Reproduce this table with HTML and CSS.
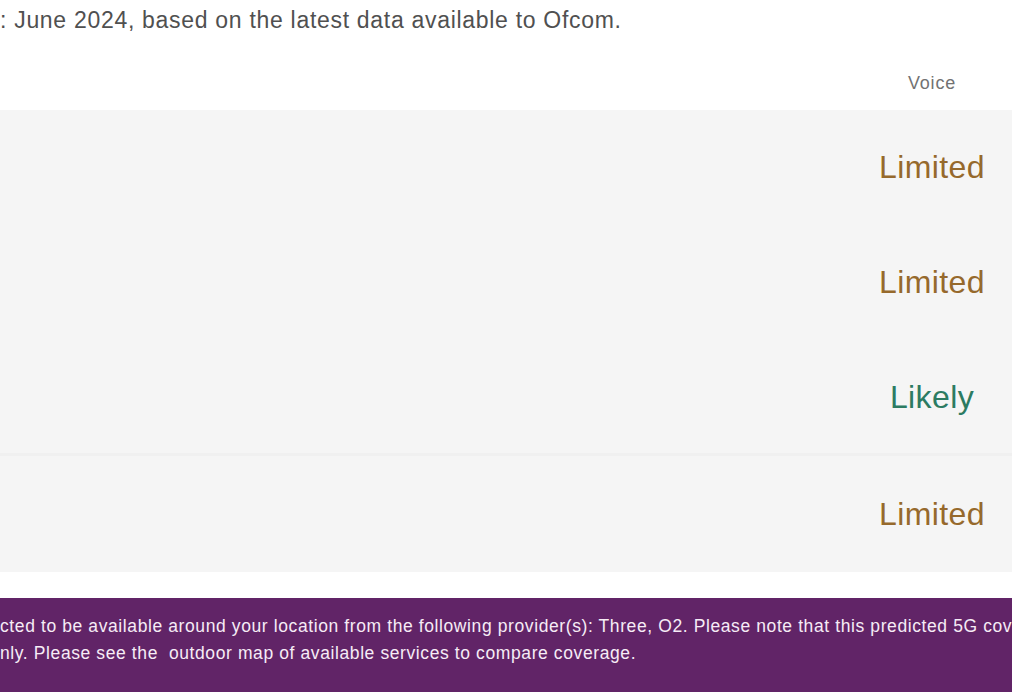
FILE: index.html
```html
<!DOCTYPE html>
<html lang="en">
<head>
<meta charset="utf-8">
<title>Mobile coverage</title>
<link rel="stylesheet" href="styles.css">
</head>
<body>
<div class="page">
  <p class="updated">: June 2024, based on the latest data available to Ofcom.</p>
  <div class="thead">
    <div class="col-spacer"></div>
    <div class="col-voice th">Voice</div>
  </div>
  <div class="tbody">
    <div class="row r1">
      <div class="col-spacer"></div>
      <div class="col-voice status limited">Limited</div>
    </div>
    <div class="row r2">
      <div class="col-spacer"></div>
      <div class="col-voice status limited">Limited</div>
    </div>
    <div class="row r3 divided">
      <div class="col-spacer"></div>
      <div class="col-voice status likely">Likely</div>
    </div>
    <div class="row r4">
      <div class="col-spacer"></div>
      <div class="col-voice status limited">Limited</div>
    </div>
  </div>
  <div class="banner">
    <p class="banner-line">cted to be available around your location from the following provider(s): Three, O2. Please note that this predicted 5G coverage is</p>
    <p class="banner-line">nly. Please see the&nbsp; outdoor map of available services to compare coverage.</p>
  </div>
</div>
</body>
</html>
```

FILE: styles.css
```css
html, body {
  margin: 0;
  padding: 0;
  background: #ffffff;
  overflow: hidden;
}

.page {
  width: 1012px;
  font-family: "Liberation Sans", Arial, sans-serif;
}

.updated {
  margin: 0;
  padding-top: 8px;
  font-size: 23px;
  line-height: 25px;
  letter-spacing: 0.7px;
  color: #505050;
  white-space: nowrap;
}

.thead {
  display: grid;
  grid-template-columns: 1fr 136px;
  padding: 40px 12px 17px 0;
}

.th {
  font-size: 18px;
  line-height: 20px;
  letter-spacing: 0.8px;
  color: #727272;
  text-align: center;
}

.tbody {
  background: #f5f5f5;
}

.row {
  display: grid;
  grid-template-columns: 1fr 136px;
  align-items: center;
  padding-right: 12px;
  height: 116px;
  box-sizing: border-box;
}

.row.r1 {
  height: 114px;
}

.row.divided {
  border-bottom: 3px solid #f0f0f0;
}

.status {
  text-align: center;
  font-size: 32px;
  line-height: 36px;
  letter-spacing: 0.4px;
}

.limited {
  color: #96692c;
}

.likely {
  color: #2c7b62;
}

.banner {
  margin-top: 26px;
  background: #612467;
  padding: 15px 0 25px 0;
  overflow: hidden;
}

.banner-line {
  margin: 0;
  font-size: 17.5px;
  line-height: 27px;
  letter-spacing: 0.6px;
  color: #f6ecf6;
  white-space: nowrap;
}
```
